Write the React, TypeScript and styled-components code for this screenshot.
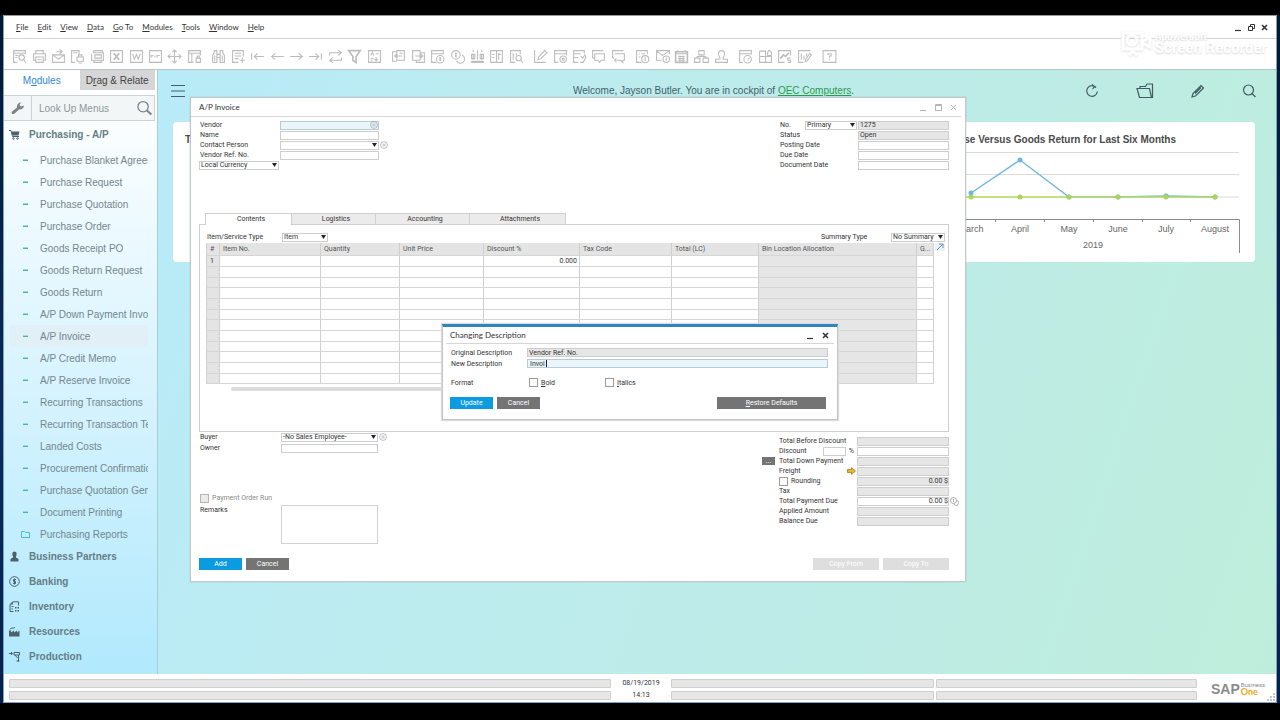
import React, { ReactNode } from "react";
import styled, { createGlobalStyle, css } from "styled-components";

const uiFont = `Lato, "Noto Sans", sans-serif`;
const formFont = `Roboto, "Noto Sans", sans-serif`;
const webFont = `"Liberation Sans", Arial, sans-serif`;

const GlobalStyle = createGlobalStyle`
  *, *::before, *::after { box-sizing: border-box; }
  body { margin: 0; background: #000; }
  button, input, select, textarea { font: inherit; color: inherit; margin: 0; padding: 0; border-radius: 0; }
  button { border: 0; background: none; cursor: pointer; }
`;

/* ---------- application frame ---------- */

const Screen = styled.div`
  min-height: 100vh;
  display: flex;
  padding: 0 3px;
  background: linear-gradient(#04182f, #0a2c5c 60%, #05204a);
  border-top: 15px solid #000;
  border-bottom: 17px solid #000;
`;

const AppFrame = styled.div`
  position: relative;
  flex: 1;
  min-width: 0;
  display: flex;
  flex-direction: column;
  background: #fff;
  border: 1px solid #7ba3c4;
  border-top-color: #9a9a9a;
`;

const MenuBar = styled.nav`
  display: flex;
  align-items: center;
  gap: 9px;
  height: 23px;
  padding: 0 7px 0 12px;
  border-bottom: 1px solid #d4d4d4;
  font: 8px/12px ${uiFont};
  color: #333;
`;

const WindowButtons = styled.div<{ $gap?: number }>`
  display: flex;
  align-items: center;
  gap: ${(p) => p.$gap ?? 4}px;
  margin-left: auto;
`;

const IconButton = styled.button`
  display: flex;
  align-items: center;
  justify-content: center;
`;

const IconButtonLeft = styled(IconButton)`
  justify-self: start;
`;

const ToolBar = styled.div`
  display: flex;
  align-items: center;
  gap: 5px;
  height: 31px;
  padding: 4px 6px 0;
  border-bottom: 1px solid #b9c4c6;
`;

const ToolGroup = styled.div<{ $width: number }>`
  display: grid;
  grid-auto-flow: column;
  grid-auto-columns: 1fr;
  width: ${(p) => p.$width}px;
  color: #bcbcbc;
`;

const Watermark = styled.div`
  position: absolute;
  top: 15px;
  right: 9px;
  display: flex;
  gap: 2px;
  color: #fff;
  font: bold 15px/13px ${formFont};
  text-shadow: 0 1px 2px #d4d4d4;
  small {
    display: block;
    font-size: 10px;
    line-height: 11px;
  }
  svg { filter: drop-shadow(0 1px 1px #e0e0e0); }
`;

const Body = styled.div`
  flex: 1;
  display: flex;
  min-width: 0;
`;

/* ---------- sidebar ---------- */

const SideBar = styled.aside`
  flex: none;
  width: 154px;
  border-right: 1px solid #a9ccd6;
  background: linear-gradient(#fff 0, #fbfeff 50px, #d9f4fe 300px, #b1e9fd 100%);
  font: 10px/22px ${webFont};
  color: #74868d;
`;

const SideTabs = styled.div`
  display: flex;
  height: 20px;
  padding-right: 2px;
`;

const SideTab = styled.button<{ $active?: boolean }>`
  flex: 1;
  line-height: 20px;
  padding-top: 1px;
  color: ${(p) => (p.$active ? "#2f86d6" : "#444")};
  background: ${(p) => (p.$active ? "#fff" : "#d6d6d6")};
`;

const SearchRow = styled.div`
  display: flex;
  height: 26px;
  margin: 5px 2px 1px 0;
  border: 1px solid #ccd3d5;
  border-left: 0;
  background: #f3f6f7;
  color: #7d8486;
`;

const WrenchButton = styled(IconButton)`
  width: 28px;
  border-right: 1px solid #ccd3d5;
`;

const SearchInput = styled.input`
  flex: 1;
  min-width: 0;
  border: 0;
  padding: 1px 0 0 7px;
  background: transparent;
  outline: 0;
  &::placeholder { color: #8e9799; opacity: 1; }
`;

const ModuleRow = styled.a<{ $height: number }>`
  display: flex;
  align-items: center;
  gap: 9px;
  height: ${(p) => p.$height}px;
  padding: 0 0 2px 5px;
  font-weight: bold;
  color: #667d84;
  text-decoration: none;
  svg { color: #4d6168; }
`;

const MenuItem = styled.a<{ $active?: boolean }>`
  display: flex;
  align-items: center;
  height: 22px;
  margin: 0 9px 0 6px;
  padding: 1px 0 0 9px;
  color: inherit;
  text-decoration: none;
  white-space: nowrap;
  overflow: hidden;
  background: ${(p) => (p.$active ? "#e1eff7" : "transparent")};
`;

const Bullet = styled.span`
  flex: none;
  display: flex;
  align-items: center;
  justify-content: center;
  width: 13px;
  margin-right: 8px;
  padding-bottom: 1px;
  color: #4cb8d8;
`;

const Dash = styled.i`
  width: 5px;
  height: 1px;
  background: #45b5a8;
  box-shadow: 0 -1px #9fd8d4;
`;

/* ---------- cockpit desktop ---------- */

const Desktop = styled.main`
  position: relative;
  flex: 1;
  min-width: 0;
  background: linear-gradient(108deg, #b8ebf8 0%, #bdecf0 30%, #bdebe6 65%, #beeedb 100%);
`;

const CockpitBar = styled.header`
  display: grid;
  grid-template-columns: 1fr auto 1fr;
  align-items: center;
  height: 42px;
  padding: 0 20px 0 13px;
  font: 10px/14px ${webFont};
  color: #43616a;
  a { color: #2c9a4b; }
`;

const CockpitIcons = styled.div`
  display: flex;
  align-items: center;
  justify-content: flex-end;
  gap: 37px;
  color: #3f5c60;
`;

const Widget = styled.section`
  display: flex;
  justify-content: space-between;
  height: 140px;
  margin: 10px 21px 0 15px;
  padding: 12px 10px 0 12px;
  border-radius: 4px;
  background: #fff;
`;

const WidgetPane = styled.div`
  display: flex;
  flex-direction: column;
  align-items: flex-end;
`;

const WidgetTitle = styled.h2`
  margin: 0;
  padding-right: 69px;
  font: bold 10px/12px ${webFont};
  color: #4a4a4a;
  white-space: nowrap;
`;

/* ---------- windows ---------- */

const AppWindow = styled.section`
  position: absolute;
  top: 27px;
  left: 32px;
  width: 776px;
  background: #fff;
  border: 1px solid #c0c8ca;
  box-shadow: 0 0 1px #9aa;
  font: 7px/10px ${formFont};
  color: #333;
`;

const TitleBar = styled.header`
  display: flex;
  align-items: center;
  height: 19px;
  margin-right: 4px;
  padding: 0 3px 0 8px;
  border-bottom: 1px solid #d6d6d6;
  font: 8px/12px ${uiFont};
`;

const WindowBody = styled.div`
  padding: 3px 16px 10px 8px;
`;

const Split = styled.div`
  display: flex;
  justify-content: space-between;
  align-items: flex-start;
`;

const Row = styled.div`
  display: flex;
  align-items: center;
  height: 10px;
`;

const Label = styled.label<{ $width: number }>`
  flex: none;
  width: ${(p) => p.$width}px;
  padding-left: 1px;
  white-space: nowrap;
`;

const fieldSkin = css`
  height: 9px;
  border: 1px solid #cdcdcd;
  background: #fff;
  outline: 0;
`;

const Field = styled.input<{ $width?: number; $tone?: "active" | "locked"; $right?: boolean }>`
  ${fieldSkin}
  ${(p) => (p.$width ? `width: ${p.$width}px;` : "flex: 1; min-width: 0;")}
  padding: 0 ${(p) => (p.$right ? 0 : 1)}px;
  line-height: 7px;
  text-align: ${(p) => (p.$right ? "right" : "left")};
  ${(p) => p.$tone === "active" && "background: #e9f5fb; border-color: #b8cad4; padding: 0 2px;"}
  ${(p) => p.$tone === "locked" && "background: #e6e6e6;"}
`;

const SelectBox = styled.span<{ $width: number }>`
  position: relative;
  flex: none;
  width: ${(p) => p.$width}px;
  height: 9px;
  display: flex;
  select {
    ${fieldSkin}
    width: 100%;
    padding: 0 1px;
    appearance: none;
    line-height: 7px;
  }
  svg {
    position: absolute;
    top: 2px;
    right: 2px;
    pointer-events: none;
  }
`;

const CheckBox = styled.input`
  flex: none;
  appearance: none;
  width: 9px;
  height: 9px;
  border: 1px solid #9a9a9a;
  background: #fff;
  &:disabled { background: #ececec; border-color: #b5b5b5; }
`;

const Tabs = styled.div`
  display: flex;
  margin: 43px 0 0 6px;
`;

const Tab = styled.button<{ $width: number; $active?: boolean }>`
  width: ${(p) => p.$width}px;
  height: 11px;
  padding-left: 5px;
  line-height: 10px;
  border: 1px solid #d0d0d0;
  border-bottom: 0;
  margin-right: -1px;
  background: ${(p) => (p.$active ? "#fff" : "#ebebeb")};
  ${(p) => p.$active && "height: 12px; padding-bottom: 1px; margin-bottom: -1px; z-index: 1;"}
`;

const TabPanel = styled.div`
  padding: 7px 3px 40px 6px;
  border: 1px solid #d0d0d0;
`;

const GridArea = styled.div`
  display: flex;
  align-items: flex-start;
  gap: 1px;
  margin-top: 1px;
`;

const Grid = styled.table`
  flex: 1;
  table-layout: fixed;
  width: 100%;
  border-collapse: separate;
  border-spacing: 0;
  border-left: 1px solid #cfcfcf;
  th, td {
    height: 11px;
    padding: 0 3px;
    border-right: 1px solid #cfcfcf;
    border-bottom: 1px solid #d6d6d6;
    font-weight: normal;
    text-align: left;
    line-height: 9px;
    white-space: nowrap;
    overflow: hidden;
  }
  thead th { height: 13px; background: #e4e4e4; color: #555; }
  tbody tr:nth-child(3n) td, tbody tr:nth-child(3n) th { height: 10px; }
  tbody th { background: #e4e4e4; }
  td:nth-child(5) { padding-right: 2px; text-align: right; }
  td:nth-child(8) { background: #e6e6e6; }
`;

const ScrollThumb = styled.div`
  width: 260px;
  height: 4px;
  margin: 3px 0 0 25px;
  border-radius: 2px;
  background: #dcdcdc;
`;

const ExpandButton = styled(IconButton)`
  width: 10px;
  height: 8px;
  color: #6c92c2;
  background: #e9f1f9;
`;

const LeftFooter = styled.div`
  display: flex;
  flex-direction: column;
  gap: 1px;
`;

const Totals = styled.div`
  margin-top: 4px;
  display: grid;
  grid-template-columns: 16px 79px 92px;
  grid-auto-rows: 10px;
  align-items: center;
`;

const TotalLabel = styled.div`
  display: flex;
  align-items: center;
  justify-content: space-between;
  padding: 0 1px;
  height: 10px;
  white-space: nowrap;
`;

const TotalValue = styled.div`
  position: relative;
  display: flex;
`;

const DetailLink = styled(IconButton)`
  position: absolute;
  left: 93px;
  top: 0;
  color: #8d8d8d;
`;

const CheckLabel = styled.label`
  display: flex;
  align-items: center;
  gap: 3px;
`;

const PercentEntry = styled(CheckLabel)`
  padding-right: 2px;
`;

const PaymentRun = styled(CheckLabel)`
  margin-top: 38px;
  height: 12px;
  padding-left: 1px;
  color: #8a8a8a;
`;

const RemarksRow = styled.div`
  display: flex;
  align-items: flex-start;
`;

const Remarks = styled.textarea`
  width: 97px;
  height: 39px;
  border: 1px solid #d2d2d2;
  resize: none;
`;

const Actions = styled.div`
  display: flex;
  gap: 4px;
`;

const ActionButton = styled.button<{ $kind: "primary" | "plain" | "muted"; $width: number }>`
  width: ${(p) => p.$width}px;
  height: 12px;
  line-height: 12px;
  color: #fff;
  background: ${(p) => ({ primary: "#0a9be0", plain: "#747474", muted: "#dedede" })[p.$kind]};
`;

const MoreButton = styled.button`
  width: 13px;
  height: 8px;
  line-height: 4px;
  color: #fff;
  background: #747474;
`;

const ButtonRow = styled(Split)`
  margin-top: 14px;
  padding-bottom: 1px;
`;

const Faint = styled.span`
  display: flex;
  margin-left: 1px;
  color: #9a9fa6;
`;

const Spacer = styled.span`
  width: 1px;
`;

const Muted = styled.span`
  display: flex;
  gap: 6px;
  color: #b4b4b4;
`;

const PickIcon = styled.span`
  position: absolute;
  top: 0;
  right: 1px;
  display: flex;
  color: #9aa4b0;
`;

const VendorWrap = styled.span`
  position: relative;
  display: flex;
`;

const Dialog = styled(AppWindow)`
  top: 254px;
  left: 284px;
  width: 396px;
  border: 1px solid #c4c4c4;
  border-top: 3px solid #2e86bb;
  box-shadow: 0 0 1px 1px #dcdcdc;
`;

const DialogTitle = styled(TitleBar)`
  height: 17px;
  margin: 0 3px;
  padding: 0 4px;
`;

const DialogBody = styled.div`
  padding: 3px 9px 10px 7px;
`;

const DialogRow = styled(Row)<{ $top?: number }>`
  height: 11px;
  margin-top: ${(p) => p.$top ?? 0}px;
`;

const DialogActions = styled(Split)`
  margin-top: 9px;
  padding-right: 2px;
`;

const FormatOption = styled(CheckLabel)`
  width: 76px;
`;

const FieldWithCaret = styled.span`
  position: relative;
  flex: 1;
  display: flex;
`;

const Caret = styled.i`
  position: absolute;
  top: 1px;
  left: 19px;
  width: 1px;
  height: 7px;
  background: #222;
`;

/* ---------- status bar ---------- */

const StatusBar = styled.footer`
  display: grid;
  grid-template-columns: 602fr 56px 263fr 261fr 71px;
  column-gap: 2px;
  row-gap: 3px;
  grid-template-rows: 9px 9px;
  height: 28px;
  padding: 5px 6px 0 5px;
  font: 7px/9px ${formFont};
  color: #333;
  text-align: center;
`;

const StatusCell = styled.div`
  border: 1px solid #cfcfcf;
  border-radius: 1px;
  background: #e6e6e6;
`;

const Brand = styled.div`
  grid-column: 5;
  grid-row: 1 / 3;
  display: flex;
  align-items: center;
  gap: 1px;
  padding: 0 0 2px 12px;
  font: bold 14px/14px ${webFont};
  color: #8b8b8b;
  span { font: 6px/7px ${formFont}; text-align: left; }
  b { display: block; font: bold 9px/8px ${uiFont}; color: #f0a81c; }
`;

const ResizeGrip = styled.svg`
  position: absolute;
  right: 1px;
  bottom: 1px;
`;

/* ---------- icons ---------- */

const Svg = ({ children, size = 14, w = 1, box = 14 }: { children: ReactNode; size?: number; w?: number; box?: number }) => (
  <svg width={size} height={size} viewBox={`0 0 ${box} ${box}`} fill="none" stroke="currentColor" strokeWidth={w} aria-hidden="true">
    {children}
  </svg>
);

const P = ({ d }: { d: string }) => <path d={d} />;

const toolGroups: { width: number; icons: [string, ReactNode][] }[] = [
  {
    width: 194,
    icons: [
      ["Preview", <><P d="M5 12.500H1.500V1.500H12.500V5M1.500 4H12.500M3 6H6M3 8H5" /><circle cx="9" cy="8" r="2.500" /><P d="M11 10L13 13" /></>],
      ["Print", <><P d="M3.500 4.500V1.500H10.500V4.500M3.500 10.500H1.500V4.500H12.500V10.500H10.500M3.500 7.500H10.500V12.500H3.500ZM5 10H9" /></>],
      ["Email", <><P d="M1.500 5.500H12.500V12.500H1.500ZM1.500 5.500L7 9.500L12.500 5.500M5 2.500H10M8 .500L10.500 2.500L8 4.500" /></>],
      ["SMS", <><P d="M5 12.500H1.500V1.500H8.500V6M3 3.500H7M6.500 7.500H12.500V11.500H6.500ZM8 7V5.500H11V7M8 13H11" /></>],
      ["Fax", <><P d="M3.500 3.500V1.500H11.500V3.500M2.500 3.500H12.500V10.500H1.500V4.500M4.500 5.500H10.500V8.500H4.500ZM3.500 10.500V12.500H10.500V10.500" /></>],
      ["Export to Excel", <><P d="M1.500 1.500H12.500V12.500H1.500Z" /><path d="M4.500 4L9.500 10M9.500 4L4.500 10" strokeWidth="1.700" /></>],
      ["Export to Word", <><P d="M1.500 1.500H12.500V12.500H1.500ZM3.500 4.500L5 9.500L7 5L8.500 9.500L10.500 4.500" /></>],
      ["Export to PDF", <><P d="M1.500 1.500H12.500V12.500H1.500ZM3 8V6H4.500V7M6.500 6V8M8.500 8V6H11" /></>],
      ["Launch Application", <><P d="M7 1V13M1 7H13M5 3L7 1L9 3M5 11L7 13L9 11M3 5L1 7L3 9M11 5L13 7L11 9" /></>],
      ["Lock Screen", <><P d="M6 12.500H1.500V1.500H12.500V6M1.500 4H12.500M4.500 4V12M8.500 8.500H12.500V12.500H8.500ZM9.500 8V6.500H11.500V8" /></>],
    ],
  },
  {
    width: 175,
    icons: [
      ["Find", <><P d="M1.500 12.500V6L3 3.500V1.500H5.500V12.500H1.500M8.500 12.500V1.500H11V3.500L12.500 6V12.500ZM5.500 5H8.500M5.500 8H8.500M3.500 6V11M10.500 6V11" /></>],
      ["Add", <><P d="M7 12.500H1.500V1.500H11.500V7M3.500 4H9.500M3.500 6.500H9.500M3.500 9H7M10.500 8V13M8 10.500H13" /></>],
      ["First Record", <><P d="M1.500 4V10M13 7H4M7 4L4 7L7 10" /></>],
      ["Previous Record", <><P d="M13 7H1.500M5 4L1.500 7L5 10" /></>],
      ["Next Record", <><P d="M1 7H12.500M9 4L12.500 7L9 10" /></>],
      ["Last Record", <><P d="M12.500 4V10M1 7H10M7 4L10 7L7 10" /></>],
      ["Refresh", <><P d="M1.500 6V3.500H12M9.500 1L12.500 3.500L9.500 6M12.500 8V10.500H2M4.500 8L1.500 10.500L4.500 13" /></>],
      ["Filter", <><path d="M1.500 1.500H12.500L8.500 7V12.500L5.500 10.500V7Z" strokeWidth="1.500" /></>],
      ["Sort", <><P d="M1.500 1.500H12.500V12.500H1.500ZM3.500 6L5 3L6.500 6M8 4.500H11M3.500 9H6M8.500 7.500V11M7 9.500L8.500 11L10 9.500M3.500 11H5" /></>],
    ],
  },
  {
    width: 137,
    icons: [
      ["Base Document", <><P d="M5.500 2.500H1.500V11.500H5.500M5.500 1.500H12.500V10.500H5.500ZM10.500 6.500H3.500M5.500 4.500L3.500 6.500L5.500 8.500M8 4H11" /></>],
      ["Target Document", <><P d="M1.500 1.500H8.500V10.500H1.500ZM8.500 3.500H12.500V12.500H5V10.500M4 6.500H11M9 4.500L11 6.500L9 8.500" /></>],
      ["Gross Profit", <><P d="M6 12.500H1.500V1.500H12.500V5M1.500 4.500H12.500" /><circle cx="9.500" cy="9.500" r="3.500" /><P d="M9.500 7.500V11.500M8.500 8.500H10.500M8.500 10.500H10.500" /></>],
      ["Payment Means", <><circle cx="5.500" cy="5.500" r="4" /><P d="M5.500 3V8M4.500 4.500H6.500M4.500 6.500H6.500M11 5.500A4 4 0 1 1 6 11" /></>],
      ["Volume and Weight", <><path d="M1 12H13" strokeWidth="2" /><P d="M3 10V5M7 10V1.500M11 10V5M1.500 5H4.500V9H1.500ZM9.500 5H12.500V9H9.500ZM3 3V1M11 3V1" /></>],
      ["Transaction Journal", <><P d="M1.500 1.500H12.500V12.500H1.500ZM7 1V13M3 5H5M3 8H5M9 5H11M9 3.500V10" /></>],
      ["Layout Designer", <><P d="M6 12.500H1.500V1.500H10.500V5M4 4V10M7 4V6" /><circle cx="9" cy="8.500" r="2.500" /><P d="M11 10.500L13 13" /></>],
    ],
  },
  {
    width: 97,
    icons: [
      ["Edit Chart", <><P d="M1.500 1V12.500H12M4.500 10L5.500 7L11 1.500L13 3.500L7.500 9Z" /></>],
      ["Form Settings", <><P d="M5 12.500H1.500V1.500H13.500M1.500 4.500H12.500M12.500 1.500V6" /><circle cx="9.500" cy="9.500" r="3" /><circle cx="9.500" cy="9.500" r="1" /></>],
      ["Form Editor", <><P d="M6 12.500H1.500V1.500H11.500V4M1.500 4.500H8M1.500 8H6M8 6.500L10 8.500L12 5.500L13 7.500L10.500 12.500H7.500" /></>],
      ["Chat", <><P d="M1.500 8.500V1.500H11.500M1.500 8.500H3.500M3.500 4.500H12.500V10.500H9.500L8 12.500L6.500 10.500H3.500Z" /></>],
      ["Replies", <><P d="M1.500 8.500V1.500H11.500M1.500 8.500H3M3.500 4.500H12.500V10.500H11V12.500L9 10.500H5M5 8.500L3.500 10.500L5 12.500" /></>],
    ],
  },
  {
    width: 98,
    icons: [
      ["Alerts", <><P d="M6 12.500H1.500V1.500H11.500V5M3.500 4.500H4.500M6 4.500H9.500M3.500 7.500H5" /><circle cx="9.500" cy="9.500" r="3.300" /><P d="M9.500 7.500V11.500" /></>],
      ["Mail Alert", <><P d="M6 10.500H1.500V1.500H13.500V5M1.500 2L7 6L13 2" /><circle cx="10.500" cy="9.500" r="3" /><P d="M10.500 8V11" /></>],
      ["Calendar", <><path d="M1.500 2.500H12.500V12.500H1.500Z" strokeWidth="1.500" /><P d="M1.500 4.500H12.500M3.500 1V3M10.500 1V3M4 7H10M4 9H10M4 11H10M5.500 6V12M8.500 6V12" /></>],
      ["Relationship Map", <><P d="M4.500 1.500H9.500V5.500H4.500ZM.500 8.500H5.500V12.500H.500ZM8.500 8.500H13.500V12.500H8.500ZM7 5.500V7M3 8.500V7H11V8.500" /></>],
      ["User", <><P d="M5.500 8C3 5 4 1.500 7 1.500S11 5 8.500 8V9.500H12.500V12.500H1.500V9.500H5.500Z" /></>],
    ],
  },
  {
    width: 78,
    icons: [
      ["Dashboard", <><P d="M4.500 12.500H1.500V1.500H12.500V5M1.500 4.500H12.500" /><circle cx="9" cy="9.500" r="3.500" /><P d="M9 10L11 8" /></>],
      ["Widgets", <><P d="M1.500 2H7V7H1.500ZM1.500 7H7V12.500H1.500ZM7 7H12.500V12.500H7ZM9 6V3L10.500 1L12.500 3V6Z" /></>],
      ["Sales Analysis", <><P d="M7 12.500H1.500V1.500H12.500V6M12.500 8.500H10V10.500H12.500V12.500H10" /><path d="M3 9L6 5.500L8 7L11 3.500" strokeWidth="1.500" /></>],
      ["Reports", <><P d="M6 12.500H1.500V1.500H12.500M4 4.500V10M6.500 6V10M9 4V7M7.500 12L8 10L12 4L13.500 5.500L9.500 11Z" /></>],
    ],
  },
  {
    width: 20,
    icons: [["Help", <><P d="M1 1.500H13V12.500H1ZM5.500 5.500V4.500H8.500V6.500H7V8.500M7 9.500V10.500" /></>]],
  },
];

const DownArrow = () => (
  <svg width="5" height="4" viewBox="0 0 5 4" aria-hidden="true"><path d="M0 0H5L2.500 4Z" fill="#222" /></svg>
);

const ListIcon = () => (
  <Svg size={8} box={8} w={0.7}><circle cx="4" cy="4" r="3.400" /><P d="M2.500 3.200H5.500M2.500 4.800H5.500" /></Svg>
);

const Minimize = () => <Svg size={9} box={9} w={1.2}><P d="M1 7.500H7" /></Svg>;
const Restore = () => <Svg size={9} box={9}><P d="M1.500 3.500H5.500V7.500H1.500ZM3.500 3V1.500H7.500V5.500H6" /></Svg>;
const Maximize = () => <Svg size={9} box={9}><P d="M1.500 1.500H7.500V7.500H1.500ZM1.500 2.500H7.500" /></Svg>;
const Close = ({ w = 1.6 }: { w?: number }) => <Svg size={9} box={9} w={w}><P d="M2 2L7 7M7 2L2 7" /></Svg>;

const MutedControls = () => (
  <Muted>
    <IconButton aria-label="Minimize"><Minimize /></IconButton>
    <IconButton aria-label="Maximize"><Maximize /></IconButton>
    <IconButton aria-label="Close"><Close w={1} /></IconButton>
  </Muted>
);

const moduleIcons: Record<string, ReactNode> = {
  cart: <Svg size={11} box={11} w={1}><P d="M0 1.500H2L3.500 7.500H10" /><path d="M2.500 2.500H10.500L9.500 6.500H3.500Z" fill="currentColor" stroke="none" /><circle cx="4.500" cy="9.500" r=".800" /><circle cx="8.500" cy="9.500" r=".800" /></Svg>,
  person: <Svg size={11} box={11}><path d="M5.500 .500C8 .500 8 3.500 7 5.500V6.500L9.500 8V10.500H1.500V8L4 6.500V5.500C3 3.500 3 .500 5.500 .500Z" fill="currentColor" stroke="none" /></Svg>,
  coin: <Svg size={11} box={11}><circle cx="5.500" cy="5.500" r="4.800" /><P d="M7 3.500H4.500V5.500H6.500V7.500H4M5.500 2.500V8.500" /></Svg>,
  stock: <Svg size={11} box={11}><P d="M4.500 10.500H1V3.500L4 .800H9.500V4.500M2.500 5.500H4.500M2.500 8H4" /><path d="M1 3.500L4 .800V3.500ZM6 6H7.500V7.500H6ZM8.500 6H10V7.500H8.500ZM6 9H7.500V10.500H6ZM8.500 9H10V10.500H8.500Z" fill="currentColor" stroke="none" /></Svg>,
  factory: <Svg size={11} box={11}><path d="M0 10.500V4.500H2V6.500L5 4.500V6.500L8 4.500V6.500L10.500 4.500V10.500Z" fill="currentColor" stroke="none" /><P d="M1 3.500C2 1 4 3 6 1.500" /></Svg>,
  robot: <Svg size={11} box={11}><P d="M0 2.500H3M2 1L3.500 2.500L2 4M5 1.500H10.500V4H5ZM6 4L8.500 7M9.500 4V10.500M7.500 10H10.500" /></Svg>,
};

/* ---------- content ---------- */

const menus = ["File", "Edit", "View", "Data", "Go To", "Modules", "Tools", "Window", "Help"];

const purchasing = [
  "Purchase Blanket Agreement", "Purchase Request", "Purchase Quotation", "Purchase Order", "Goods Receipt PO",
  "Goods Return Request", "Goods Return", "A/P Down Payment Invoice", "A/P Invoice", "A/P Credit Memo",
  "A/P Reserve Invoice", "Recurring Transactions", "Recurring Transaction Templates", "Landed Costs",
  "Procurement Confirmation", "Purchase Quotation Generation", "Document Printing",
];

const modules = [
  ["person", "Business Partners"], ["coin", "Banking"], ["stock", "Inventory"], ["factory", "Resources"], ["robot", "Production"],
];

const columns: [string, number?][] = [
  ["#", 13], ["Item No.", 101], ["Quantity", 79], ["Unit Price", 84], ["Discount %", 96],
  ["Tax Code", 92], ["Total (LC)", 87], ["Bin Location Allocation"], ["G...", 17],
];

const months = ["March", "April", "May", "June", "July", "August"];
const purchases = [47, 14, 51, 51, 50, 51];

const Mnemonic = ({ text, at = 0 }: { text: string; at?: number }) => (
  <span>{text.slice(0, at)}<u>{text[at]}</u>{text.slice(at + 1)}</span>
);

const MenuLink = styled.a`
  color: inherit;
  text-decoration: none;
`;

const Select = ({ id, width, value, label }: { id: string; width: number; value: string; label?: string }) => (
  <SelectBox $width={width}>
    <select id={id} aria-label={label} defaultValue={value}><option>{value}</option></select>
    <DownArrow />
  </SelectBox>
);

const TrendChart = () => {
  const x = (i: number) => 31 + i * 49 - (i > 3 ? 1 : 0);
  return (
    <svg width="305" height="110" viewBox="0 0 305 110" role="img" aria-label="Purchases and returns by month">
      <path d="M0 6.500H299M0 28.500H299M0 51H299" stroke="#dadada" />
      <path d="M0 73.500H299.500V107" fill="none" stroke="#8c8c8c" />
      <g stroke="#8c8c8c">{[55, 104, 153, 202, 250].map((t) => <path key={t} d={`M${t}.500 73V76`} />)}</g>
      <polyline points={purchases.map((y, i) => `${x(i)},${y}`).join(" ")} fill="none" stroke="#6db7dc" strokeWidth="1.300" />
      <path d="M0 51H275" stroke="#b7dd62" strokeWidth="1.600" />
      {purchases.map((y, i) => <circle key={i} cx={x(i)} cy={y} r="2.500" fill="#6db7dc" />)}
      {months.map((m, i) => (
        <g key={m}>
          <circle cx={x(i)} cy="51" r="2.500" fill="#abd458" />
          <text x={x(i)} y="86" textAnchor="middle" fontFamily="Liberation Sans, sans-serif" fontSize="9" fill="#666">{m}</text>
        </g>
      ))}
      <text x="153" y="102" textAnchor="middle" fontFamily="Liberation Sans, sans-serif" fontSize="9" fill="#666">2019</text>
    </svg>
  );
};

const InvoiceGrid = () => (
  <Grid>
    <colgroup>{columns.map(([name, width]) => <col key={name} width={width} />)}</colgroup>
    <thead><tr>{columns.map(([name]) => <th key={name}>{name}</th>)}</tr></thead>
    <tbody>
      {Array.from({ length: 12 }, (_, r) => (
        <tr key={r}>
          <th>{r === 0 ? "1" : ""}</th>
          {columns.slice(1).map(([name]) => <td key={name}>{r === 0 && name === "Discount %" ? "0.000" : ""}</td>)}
        </tr>
      ))}
    </tbody>
  </Grid>
);

type Total = { id: string; label: ReactNode; value?: string; open?: boolean; extra?: ReactNode; lead?: ReactNode; tail?: ReactNode };

const totals: Total[] = [
  { id: "before", label: "Total Before Discount" },
  { id: "discount", label: "Discount", open: true, extra: <PercentEntry><Field $width={23} aria-label="Discount percent" /><span>%</span></PercentEntry> },
  { id: "down", label: "Total Down Payment", lead: <MoreButton aria-label="Down payment details">...</MoreButton> },
  { id: "freight", label: "Freight", extra: <svg width="9" height="8" viewBox="0 0 9 8" aria-hidden="true"><path d="M.500 2.500H4.500V.500L8.500 4L4.500 7.500V5.500H.500Z" fill="#efb52e" stroke="#a67a1d" strokeWidth=".8" /></svg> },
  { id: "rounding", label: "Rounding", value: "0.00 $" },
  { id: "tax", label: "Tax" },
  { id: "due", label: "Total Payment Due", value: "0.00 $", open: true, tail: <DetailLink aria-label="Payment details"><Svg size={9} box={9} w={0.7}><circle cx="3.500" cy="3.500" r="3" /><path d="M7 3.500A2.500 2.500 0 1 1 4 7M3.500 2V5" /></Svg></DetailLink> },
  { id: "applied", label: "Applied Amount" },
  { id: "balance", label: "Balance Due" },
];

const VendorField = () => (
  <VendorWrap><Field id="vendor" $width={99} $tone="active" /><PickIcon><ListIcon /></PickIcon></VendorWrap>
);

const InvoiceWindow = () => (
  <AppWindow aria-label="A/P Invoice">
    <TitleBar>
      A/P Invoice
      <WindowButtons><MutedControls /></WindowButtons>
    </TitleBar>
    <WindowBody>
      <Split>
        <div>
          <Row><Label $width={81} htmlFor="vendor">Vendor</Label><VendorField /></Row>
          <Row><Label $width={81} htmlFor="name">Name</Label><Field id="name" $width={99} /></Row>
          <Row><Label $width={81} htmlFor="contact">Contact Person</Label><Select id="contact" width={99} value="" /><Faint><ListIcon /></Faint></Row>
          <Row><Label $width={81} htmlFor="ref">Vendor Ref. No.</Label><Field id="ref" $width={99} /></Row>
          <Row><Select id="currency" label="Currency" width={80} value="Local Currency" /></Row>
        </div>
        <div>
          <Row><Label $width={26} htmlFor="series">No.</Label><Select id="series" width={52} value="Primary" /><Spacer /><Field aria-label="Document number" $width={91} $tone="locked" defaultValue="1275" readOnly /></Row>
          <Row><Label $width={79} htmlFor="status">Status</Label><Field id="status" $width={91} $tone="locked" defaultValue="Open" readOnly /></Row>
          <Row><Label $width={79} htmlFor="posting">Posting Date</Label><Field id="posting" $width={91} /></Row>
          <Row><Label $width={79} htmlFor="duedate">Due Date</Label><Field id="duedate" $width={91} /></Row>
          <Row><Label $width={79} htmlFor="docdate">Document Date</Label><Field id="docdate" $width={91} /></Row>
        </div>
      </Split>
      <Tabs>
        <Tab $width={87} $active>Contents</Tab>
        <Tab $width={85}>Logistics</Tab>
        <Tab $width={95}>Accounting</Tab>
        <Tab $width={97}>Attachments</Tab>
      </Tabs>
      <TabPanel>
        <Split>
          <Row><Label $width={76} htmlFor="itemtype">Item/Service Type</Label><Select id="itemtype" width={46} value="Item" /></Row>
          <Row><Label $width={71} htmlFor="summary">Summary Type</Label><Select id="summary" width={54} value="No Summary" /></Row>
        </Split>
        <GridArea>
          <InvoiceGrid />
          <ExpandButton aria-label="Expand table"><Svg size={8} box={8}><P d="M1 7L7 1M3 1H7V5" /></Svg></ExpandButton>
        </GridArea>
        <ScrollThumb />
      </TabPanel>
      <Split>
        <LeftFooter>
          <Row><Label $width={82} htmlFor="buyer">Buyer</Label><Select id="buyer" width={97} value="-No Sales Employee-" /><Faint><ListIcon /></Faint></Row>
          <Row><Label $width={82} htmlFor="owner">Owner</Label><Field id="owner" $width={97} /></Row>
          <PaymentRun><CheckBox type="checkbox" disabled />Payment Order Run</PaymentRun>
          <RemarksRow><Label $width={82} htmlFor="remarks">Remarks</Label><Remarks id="remarks" /></RemarksRow>
        </LeftFooter>
        <Totals>
          {totals.map((t) => (
            <React.Fragment key={t.id}>
              <div>{t.lead}</div>
              <TotalLabel>
                {t.id === "rounding" ? <CheckLabel><CheckBox type="checkbox" />{t.label}</CheckLabel> : <label htmlFor={t.id}>{t.label}</label>}
                {t.extra}
              </TotalLabel>
              <TotalValue>
                <Field id={t.id} aria-label={t.id} $tone={t.open ? undefined : "locked"} $right defaultValue={t.value} />
                {t.tail}
              </TotalValue>
            </React.Fragment>
          ))}
        </Totals>
      </Split>
      <ButtonRow>
        <Actions>
          <ActionButton $kind="primary" $width={43}>Add</ActionButton>
          <ActionButton $kind="plain" $width={43}>Cancel</ActionButton>
        </Actions>
        <Actions>
          <ActionButton $kind="muted" $width={66}>Copy From</ActionButton>
          <ActionButton $kind="muted" $width={66}>Copy To</ActionButton>
        </Actions>
      </ButtonRow>
    </WindowBody>
  </AppWindow>
);

const DescriptionDialog = () => (
  <Dialog role="dialog" aria-label="Changing Description">
    <DialogTitle>
      Changing Description
      <WindowButtons $gap={6}>
        <IconButton aria-label="Minimize"><Minimize /></IconButton>
        <IconButton aria-label="Close"><Close /></IconButton>
      </WindowButtons>
    </DialogTitle>
    <DialogBody>
      <DialogRow><Label $width={77} htmlFor="original">Original Description</Label><Field id="original" $tone="locked" defaultValue="Vendor Ref. No." readOnly /></DialogRow>
      <DialogRow>
        <Label $width={77} htmlFor="renamed">New Description</Label>
        <FieldWithCaret><Field id="renamed" $tone="active" defaultValue="Invoi" /><Caret /></FieldWithCaret>
      </DialogRow>
      <DialogRow $top={8}>
        <Label as="span" $width={79}>Format</Label>
        <FormatOption><CheckBox type="checkbox" /><Mnemonic text="Bold" /></FormatOption>
        <FormatOption><CheckBox type="checkbox" /><Mnemonic text="Italics" /></FormatOption>
      </DialogRow>
      <DialogActions>
        <Actions>
          <ActionButton $kind="primary" $width={43}>Update</ActionButton>
          <ActionButton $kind="plain" $width={43}>Cancel</ActionButton>
        </Actions>
        <ActionButton $kind="plain" $width={109}><Mnemonic text="Restore Defaults" /></ActionButton>
      </DialogActions>
    </DialogBody>
  </Dialog>
);

export default function App() {
  return (
    <Screen>
      <GlobalStyle />
      <AppFrame>
        <MenuBar>
          {menus.map((m) => <MenuLink key={m} href="#"><Mnemonic text={m} /></MenuLink>)}
          <WindowButtons>
            <IconButton aria-label="Minimize"><Minimize /></IconButton>
            <IconButton aria-label="Restore"><Restore /></IconButton>
            <IconButton aria-label="Close"><Close /></IconButton>
          </WindowButtons>
        </MenuBar>
        <ToolBar>
          {toolGroups.map((g, i) => (
            <ToolGroup key={i} $width={g.width}>
              {g.icons.map(([name, art]) => <IconButton key={name} aria-label={name}><Svg size={15}>{art}</Svg></IconButton>)}
            </ToolGroup>
          ))}
        </ToolBar>
        <Body>
          <SideBar>
            <SideTabs>
              <SideTab $active><Mnemonic text="Modules" at={1} /></SideTab>
              <SideTab><Mnemonic text="Drag & Relate" at={1} /></SideTab>
            </SideTabs>
            <SearchRow>
              <WrenchButton aria-label="Settings">
                <Svg size={14}><path d="M1 13L0.500 11L6 6.500C5.500 4 7.500 1.500 10 1.500L8.500 4L10 5.500L13 4.500C13 7 10.500 9 8 8.500L3 13Z" fill="currentColor" stroke="none" /></Svg>
              </WrenchButton>
              <SearchInput aria-label="Look Up Menus" placeholder="Look Up Menus" />
              <IconButton aria-label="Search"><Svg size={18} w={1}><circle cx="5.500" cy="6" r="4" /><path d="M8.500 9L12 12" strokeWidth="1.600" /></Svg></IconButton>
            </SearchRow>
            <ModuleRow href="#" $height={27}>{moduleIcons.cart}Purchasing - A/P</ModuleRow>
            {purchasing.map((name) => (
              <MenuItem key={name} href="#" $active={name === "A/P Invoice"}><Bullet><Dash /></Bullet>{name}</MenuItem>
            ))}
            <MenuItem href="#">
              <Bullet><Svg size={9} box={9}><P d="M.500 1.500H3.500L4.500 2.500H8.500V7.500H.500Z" /></Svg></Bullet>Purchasing Reports
            </MenuItem>
            {modules.map(([icon, name]) => <ModuleRow key={name} href="#" $height={25}>{moduleIcons[icon]}{name}</ModuleRow>)}
          </SideBar>
          <Desktop>
            <CockpitBar>
              <IconButtonLeft aria-label="Menu"><Svg size={14}><P d="M0 1.500H14M0 7H14M0 12.500H14" /></Svg></IconButtonLeft>
              <span>Welcome, Jayson Butler. You are in cockpit of <a href="#">OEC Computers</a>.</span>
              <CockpitIcons>
                <IconButton aria-label="Refresh"><Svg w={1.2}><P d="M11 3.500A5.300 5.300 0 1 0 12.300 7.500M7 .500L9.500 2.500L7.500 5" /></Svg></IconButton>
                <IconButton aria-label="Open"><Svg size={18} box={18} w={1.2}><P d="M4 6V4.500H9.500L11 2H16.500V15.500H4M1 6.500H13.500L15.500 15.500H3.500Z" /></Svg></IconButton>
                <IconButton aria-label="Edit"><Svg w={1.2}><P d="M1 13L2 9.500L10 1.500L12.500 4L4.500 12ZM4 9.500L10 3.500" /></Svg></IconButton>
                <IconButton aria-label="Search"><Svg w={1.2}><circle cx="6.500" cy="6" r="5" /><P d="M10 9.500L13.500 13" /></Svg></IconButton>
              </CockpitIcons>
            </CockpitBar>
            <Widget>
              <WidgetTitle>T</WidgetTitle>
              <WidgetPane>
                <WidgetTitle>Purchase Versus Goods Return for Last Six Months</WidgetTitle>
                <TrendChart />
              </WidgetPane>
            </Widget>
            <InvoiceWindow />
            <DescriptionDialog />
          </Desktop>
        </Body>
        <StatusBar>
          <StatusCell /><span>08/19/2019</span><StatusCell /><StatusCell />
          <Brand>SAP<span>Business<b>One</b></span></Brand>
          <StatusCell /><span>14:13</span><StatusCell /><StatusCell />
        </StatusBar>
        <ResizeGrip width="8" height="8" viewBox="0 0 8 8" aria-hidden="true">
          <path d="M6 0H8V2H6ZM6 3H8V5H6ZM3 3H5V5H3ZM6 6H8V8H6ZM3 6H5V8H3ZM0 6H2V8H0Z" fill="#c4c4c4" />
        </ResizeGrip>
        <Watermark>
          <svg width="32" height="26" viewBox="0 0 32 26" fill="none" stroke="#fff" strokeWidth="3" aria-hidden="true">
            <path d="M2 2H21V18H2ZM21 11L29 6V16L21 12M8 24L12 20L16 24" /><circle cx="11" cy="9" r="5" />
          </svg>
          <div><small>Apowersoft</small>Screen Recorder</div>
        </Watermark>
      </AppFrame>
    </Screen>
  );
}
